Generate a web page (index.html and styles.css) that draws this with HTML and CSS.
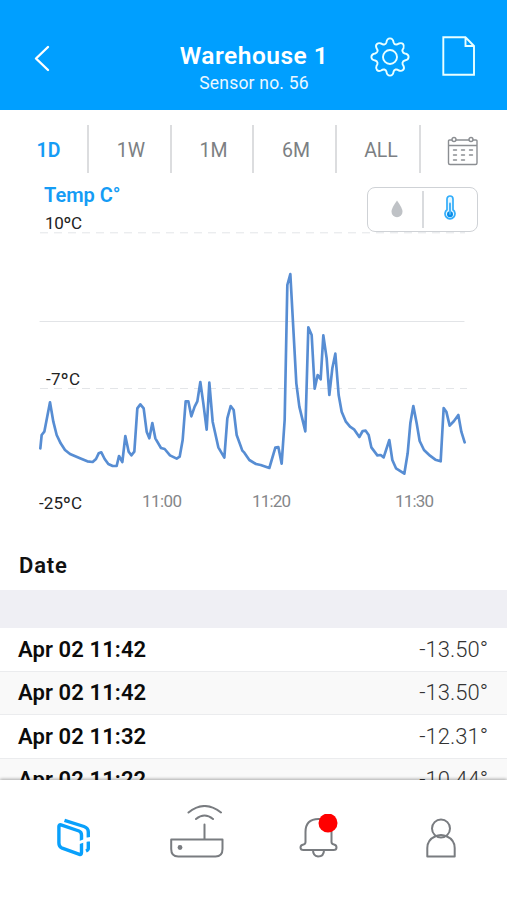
FILE: index.html
```html
<!DOCTYPE html>
<html lang="en">
<head>
<meta charset="utf-8">
<title>Warehouse 1</title>
<link rel="stylesheet" href="styles.css">
</head>
<body>
<div class="screen">
  <header class="topbar">
    <svg class="back" viewBox="0 0 20 30"><path d="M16 4 4 15.500 16 27"/></svg>
    <div class="heading">
      <h1>Warehouse 1</h1>
      <p>Sensor no. 56</p>
    </div>
    <svg class="gear" viewBox="0 0 40 40"><circle cx="20" cy="20" r="7"/><path d="M16.400 5.500Q17 1.400 20 1.400T23.600 5.500Q24.200 7.600 26.200 7.500Q27.500 7.500 28.900 6.500Q31.600 5.500 33 7T33.500 11.100Q32 13 32.500 14.300Q33 16.100 34.800 16.500Q38.600 17.200 38.600 20T34.800 23.500Q33 24 32.500 25.700Q32.200 27.200 33.500 28.900Q34.700 31.500 33 33T28.900 33.500Q27.200 32.200 25.700 32.500Q24 33 23.600 34.600Q23 38.600 20 38.600T16.400 34.600Q16 33 14.300 32.500Q12.800 32.200 11.100 33.500Q8.500 34.600 7 33T6.500 28.900Q7.800 27.200 7.500 25.700Q7 24 5.200 23.500Q1.400 22.800 1.400 20T5.200 16.500Q7 16 7.500 14.300Q7.800 12.800 6.500 11.100Q5.300 8.500 7 7T11.100 6.500Q12.600 7.700 14.200 7.500Q15.900 7.200 16.400 5.500Z"/></svg>
    <svg class="doc" viewBox="0 0 34 40"><path d="M1.300 1.300H23.500L32 10V38.700H1.300ZM23.500 1.300V10H32"/></svg>
  </header>

  <nav class="ranges">
    <span class="on">1D</span><span>1W</span><span>1M</span><span>6M</span><span class="all">ALL</span>
    <span class="cal"><svg viewBox="0 0 32 30"><path d="M5 4H2.500Q1.500 4 1.500 5V27Q1.500 28.500 3 28.500H28.500Q30 28.500 30 27V5Q30 4 29 4H26M9 4H22M1.500 9.500H30"/><circle cx="7" cy="3.500" r="2"/><circle cx="24" cy="3.500" r="2"/><path d="M6.500 14H9.500M14.500 14H17.500M22.500 14H25.500M6.500 19H9.500M14.500 19H17.500M22.500 19H25.500M6.500 24H9.500M14.500 24H17.500"/></svg></span>
  </nav>

  <section class="chart-head">
    <div class="labels"><h2>Temp C°</h2><p>10ºC</p></div>
    <div class="toggle">
      <span><svg class="drop" viewBox="0 0 12 18"><path d="M6 .500Q11.500 8 11.500 11.700A5.500 5.500 0 0 1 .500 11.700Q.500 8 6 .500Z"/></svg></span>
      <span><svg class="thermo" viewBox="0 0 12 26"><path class="tube" d="M3 4A3 3 0 0 1 9 4V14.800A5 5 0 1 1 3 14.800Z"/><circle cx="6" cy="19.300" r="3"/><path class="mercury" d="M6 19V8.500"/></svg></span>
    </div>
  </section>

  <svg class="plot" viewBox="0 0 507 284">
    <path class="dash" d="M40 .800H465M40 156.500H467"/>
    <path class="rule" d="M40 89.500H464"/>
    <g transform="translate(30 28) scale(.33333)">
      <path class="line" d="M31 565 35 525 43 515 60 427 70 485 80 525 92 550 105 570 120 582 150 595 172 604 188 606 198 597 206 580 214 577 224 597 235 612 248 618 260 618 267 588 277 606 286 528 296 575 304 586 313 575 322 445 331 433 341 445 350 515 358 535 367 489 376 535 393 564 404 567 420 586 440 596 449 590 458 540 467 424 475 424 484 469 494 440 502 424 511 366 520 430 530 509 538 368 548 485 565 562 583 593 592 475 602 438 611 450 620 525 637 572 643 578 658 600 678 612 692 615 718 624 736 563 745 561 755 611 764 480 772 75 781 42 799 370 808 440 826 514 835 202 845 225 854 386 863 345 872 358 880 226 890 295 898 405 907 325 916 281 926 405 935 455 947 484 960 500 972 508 988 531 998 513 1007 512 1016 525 1024 562 1042 586 1052 585 1061 592 1078 540 1087 600 1098 625 1123 641 1133 580 1141 490 1150 438 1160 490 1169 543 1182 570 1200 587 1216 599 1232 604 1241 444 1249 455 1259 497 1272 483 1285 465 1294 515 1304 547"/>
    </g>
    <text class="deg" x="46" y="153" textLength="34">-7ºC</text>
    <text class="deg" x="39" y="277" textLength="43">-25ºC</text>
    <text class="time" x="142" y="274.500" textLength="40">11:00</text>
    <text class="time" x="252" y="274.500" textLength="39">11:20</text>
    <text class="time" x="395" y="274.500" textLength="39">11:30</text>
  </svg>

  <section class="log">
    <h3>Date</h3>
    <div class="band"></div>
    <div class="row"><b>Apr 02 11:42</b><span>-13.50°</span></div>
    <div class="row"><b>Apr 02 11:42</b><span>-13.50°</span></div>
    <div class="row"><b>Apr 02 11:32</b><span>-12.31°</span></div>
    <div class="row"><b>Apr 02 11:22</b><span>-10.44°</span></div>
  </section>

  <footer class="tabs">
    <svg class="t1" viewBox="0 0 36 42"><path d="M4 7.800Q1.900 7.300 1.900 9.500V26Q1.900 29.500 4.500 30.800L22.500 37.300Q24.500 38 24.500 35.500V18Q24.500 15 22 14Z"/><path d="M7.500 3.300 27 9.500Q31.300 11 31.300 15V20.500M31.300 24.500V31.500Q31.300 33 29 34"/><path class="cut" d="M20 26.300 35 21"/></svg>
    <svg class="t2" viewBox="0 0 54 54"><path d="M1.200 34.500H52.500V44Q52.500 51.500 45.500 51.500H8.200Q1.200 51.500 1.200 44ZM34.500 34.500V19.500M18.500 7.500Q34.500-5.500 51 7.500M26 14Q34.500 7 43 14"/><circle cx="10" cy="42.500" r="2.400"/></svg>
    <svg class="t3" viewBox="0 0 40 46"><path d="M6.500 28V18Q6.500 5 19.500 5T32.500 18V28Q32.500 30 35 30.500Q37.500 31 37.500 33.500T34.500 36H4.500Q1.500 36 1.500 33.500T4.500 30.500Q6.500 30 6.500 28ZM14 36Q14 42 19 42.500Q25 42.500 25 36"/><circle cx="29" cy="9" r="9.500"/></svg>
    <svg class="t4" viewBox="0 0 30 40"><circle cx="15" cy="10.500" r="9"/><path d="M9 18.500Q15 15.500 21 18.500Q28.700 22 28.700 30V38.500H1.300V30Q1.300 22 9 18.500Z"/></svg>
  </footer>
</div>
</body>
</html>
```
FILE: styles.css
```css
* { box-sizing: border-box; margin: 0; padding: 0; }
body { background: #fff; font-family: Roboto, "Liberation Sans", sans-serif; }
svg { display: block; fill: none; stroke-linejoin: round; stroke-linecap: round; }
.screen { width: 507px; height: 900px; overflow: hidden; display: flex; flex-direction: column; }

.topbar { height: 110px; background: #009fff; color: #fff; display: grid; grid-template-columns: 147px 214px 57px 57px; padding-left: 32px; flex: none; align-items: start; }
.topbar svg { stroke: #e9ffff; stroke-width: 1.9; }
.topbar .back { width: 20px; height: 30px; margin-top: 43px; stroke: #fff; stroke-width: 2.4; }
.heading { width: 150px; text-align: center; padding-top: 42px; white-space: nowrap; }
.heading h1 { font-size: 24.500px; line-height: 28px; font-weight: 600; letter-spacing: .5px; }
.heading p { font-size: 17.500px; line-height: 22px; margin-top: 2px; letter-spacing: .2px; opacity: .92; }
.gear { width: 40px; height: 40px; margin: 36.500px 0 0 -23.500px; }
.doc { width: 34px; height: 40px; margin: 35.500px 0 0 -8px; stroke-linejoin: miter; }

.ranges { height: 70px; flex: none; display: grid; grid-template-columns: 79px 83px 82px 83px 84px 86px; padding: 15px 0 0 10px; }
.ranges span { height: 48px; display: flex; align-items: center; justify-content: center; padding: 2px 0 0 3px; border-right: 2px solid #dcdddf; font-size: 19.500px; color: #7c7f83; }
.ranges .on { color: #159cf5; font-weight: 600; padding-left: 0; }
.ranges .all { padding-left: 6px; }
.ranges .cal { border: 0; padding: 4px 2px 0 0; }
.cal svg { width: 32px; height: 30px; stroke: #8b8e92; stroke-width: 1.4; }

.chart-head { height: 52px; flex: none; display: flex; justify-content: space-between; padding: 0 29px 0 44px; }
.labels h2 { color: #159cf5; font-size: 20px; line-height: 24px; font-weight: 600; margin-top: 3px; }
.labels p { color: #222; font-size: 17px; line-height: 20px; margin: 6px 0 0 1px; letter-spacing: -.3px; }
.toggle { width: 111px; height: 45px; margin-top: 7px; border: 1.500px solid #cfd2d6; border-radius: 8px; display: flex; align-items: center; background: #fff; position: relative; }
.toggle span { flex: 1; height: 37px; display: flex; align-items: center; justify-content: center; }
.toggle span + span { border-left: 2px solid #d9dbde; }
.drop { width: 12px; height: 18px; fill: #bfc2c6; margin: -2px 0 0 4px; }
.thermo { width: 12px; height: 26px; margin: -3px 0 0 0; }
.thermo circle { fill: #078de9; }
.tube { fill: #e6f7ff; stroke: #32adfb; stroke-width: 1.7; }
.mercury { stroke: #4ab3f5; stroke-width: 2; }

.plot { width: 507px; height: 284px; flex: none; overflow: visible; }
.dash { stroke: #e3e5e8; stroke-width: 1; stroke-dasharray: 8 6; stroke-linecap: butt; }
.rule { stroke: #e2e4e7; stroke-width: 1.2; }
.line { stroke: #578dd3; stroke-width: 8; }
.plot text { font-size: 17px; }
.deg { fill: #222; }
.time { fill: #85878a; }

.log { height: 264px; flex: none; overflow: hidden; }
.log h3 { height: 74px; padding: 37px 0 0 19px; font-size: 22px; line-height: 25px; font-weight: 600; letter-spacing: .8px; color: #111; }
.band { height: 38px; background: #efeff4; }
.row { height: 43.500px; border-bottom: 1px solid #ebecee; display: flex; align-items: center; justify-content: space-between; padding: 0 19px 0 18px; font-size: 22px; color: #333; }
.row:nth-child(even) { background: #f9f9f9; }
.row b { font-weight: 600; color: #0b0b0b; letter-spacing: .1px; }
.row span { font-weight: 300; }

.tabs { height: 120px; flex: none; background: #fff; box-shadow: 0 -1px 3px rgba(0,0,0,.32); position: relative; display: grid; grid-template-columns: 113px 129px 126px 82px; padding-left: 57px; }
.tabs svg { stroke: #797c80; stroke-width: 2; }
.tabs .t1 { width: 36px; height: 42px; margin-top: 37px; stroke: #09a0fb; stroke-width: 3.4; stroke-linecap: butt; }
.tabs .cut { stroke: #fff; stroke-width: 3; }
.t2 { width: 54px; height: 54px; margin-top: 25px; }
.t2 circle { fill: #797c80; stroke: none; }
.t3 { width: 40px; height: 46px; margin-top: 34px; }
.tabs .t3 circle { fill: #f00; stroke: none; }
.t4 { width: 30px; height: 40px; margin: 38px 0 0 1px; }
```
